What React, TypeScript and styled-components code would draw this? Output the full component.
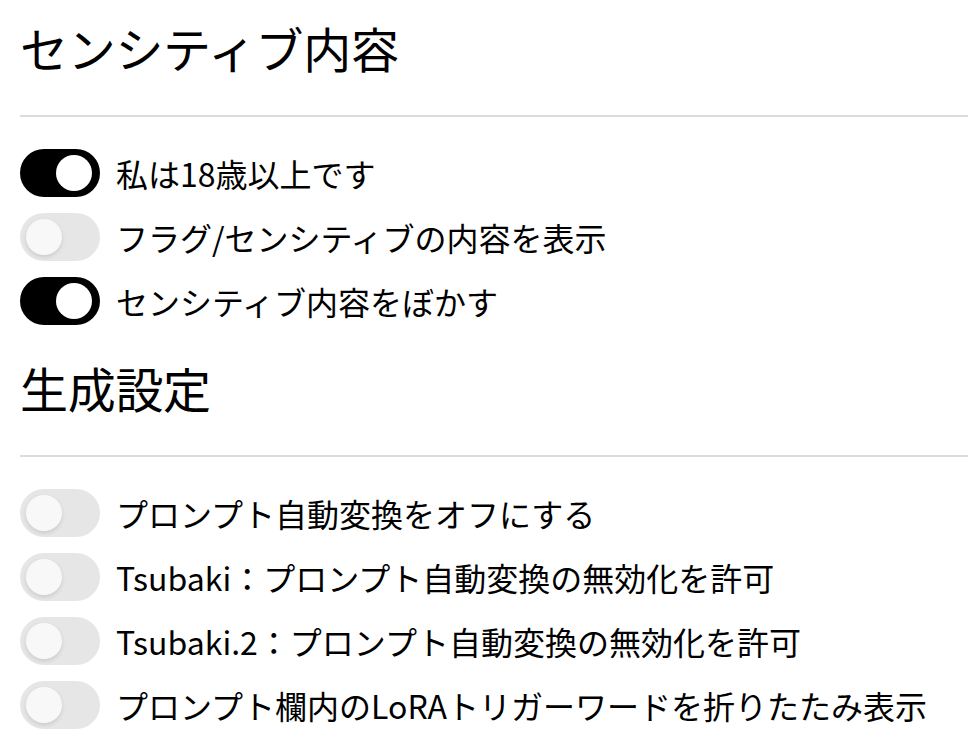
import React, {useState} from "react";
import styled, {createGlobalStyle} from "styled-components";

const GlobalStyle = createGlobalStyle`
  html, body {
    margin: 0;
    padding: 0;
    background: #ffffff;
  }
  body {
    font-family: "Noto Sans CJK JP", "Noto Sans", sans-serif;
    color: #000000;
  }
`

interface Setting {
    key: string;
    label: string;
    on: boolean;
}

const sensitive: Setting[] = [
    {key: "adult", label: "私は18歳以上です", on: true},
    {key: "flagged", label: "フラグ/センシティブの内容を表示", on: false},
    {key: "blur", label: "センシティブ内容をぼかす", on: true},
];

const generation: Setting[] = [
    {key: "autoOff", label: "プロンプト自動変換をオフにする", on: false},
    {key: "tsubaki", label: "Tsubaki：プロンプト自動変換の無効化を許可", on: false},
    {key: "tsubaki2", label: "Tsubaki.2：プロンプト自動変換の無効化を許可", on: false},
    {key: "lora", label: "プロンプト欄内のLoRAトリガーワードを折りたたみ表示", on: false},
];

const Toggle = ({on, onClick}: {on: boolean; onClick: () => void}) => (
    <Track $on={on} onClick={onClick} role="switch" aria-checked={on}>
        <Knob $on={on}/>
    </Track>
);

const SettingsSection = ({title, items, first}: {title: string; items: Setting[]; first?: boolean}) => {
    const [state, setState] = useState<Record<string, boolean>>(
        Object.fromEntries(items.map((i) => [i.key, i.on]))
    );
    return (
        <Section $first={first}>
            <Heading>{title}</Heading>
            <Divider/>
            <List>
                {items.map((item) => (
                    <Row key={item.key}>
                        <Toggle on={state[item.key]} onClick={() => setState({...state, [item.key]: !state[item.key]})}/>
                        <Label>{item.label}</Label>
                    </Row>
                ))}
            </List>
        </Section>
    );
};

const App = () => {
    return (
        <>
            <GlobalStyle/>
            <Page>
                <SettingsSection title="センシティブ内容" items={sensitive} first/>
                <SettingsSection title="生成設定" items={generation}/>
            </Page>
        </>
    );
};

export default App;

const Page = styled.div`
  padding: 23px 0 0 20px;
  display: flex;
  flex-direction: column;
`
const Section = styled.section<{$first?: boolean}>`
  display: flex;
  flex-direction: column;
  margin-top: ${props => props.$first ? 0 : 38}px;
`
const Heading = styled.h2`
  margin: 0 0 44px;
  font-size: 48px;
  line-height: 48px;
  font-weight: 400;
  letter-spacing: -0.3px;
`
const Divider = styled.hr`
  margin: 0;
  border: none;
  height: 2px;
  background: #dcdcdc;
`
const List = styled.div`
  display: flex;
  flex-direction: column;
  gap: 16px;
  margin-top: 32px;
`
const Row = styled.div`
  display: flex;
  align-items: center;
  gap: 16px;
  height: 48px;
`
const Track = styled.button<{$on: boolean}>`
  position: relative;
  flex: none;
  width: 80px;
  height: 48px;
  padding: 0;
  border: none;
  border-radius: 24px;
  background: ${props => props.$on ? "#000000" : "#e6e6e6"};
  cursor: pointer;
`
const Knob = styled.span<{$on: boolean}>`
  position: absolute;
  top: 6px;
  left: 6px;
  width: 36px;
  height: 36px;
  border-radius: 50%;
  background: ${props => props.$on ? "#ffffff" : "#f8f8f8"};
  box-shadow: ${props => props.$on ? "none" : "0 2px 4px rgba(0, 0, 0, 0.12)"};
  transform: translateX(${props => props.$on ? 30 : 0}px);
`
const Label = styled.span`
  font-size: 32px;
  line-height: 48px;
  white-space: nowrap;
  color: #000000;
`
